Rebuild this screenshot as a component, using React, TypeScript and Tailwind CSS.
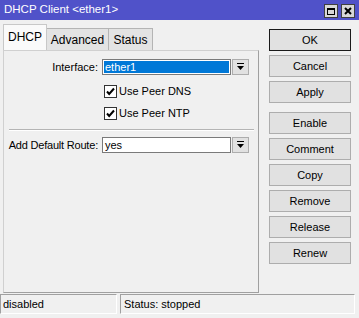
import React from 'react';

const DropArrow = () => (
  <svg width="7" height="8" viewBox="0 0 7 8">
    <rect x="0" y="0" width="7" height="1" fill="#000" />
    <path d="M0 3h7L3.5 7z" fill="#000" />
  </svg>
);

const Check = () => (
  <div className="w-[13px] h-[13px] bg-white border border-[#333] flex items-center justify-center">
    <svg width="9" height="9" viewBox="0 0 9 9">
      <path d="M1 4.5l2.2 2.5L8 1.5" stroke="#000" strokeWidth="2" fill="none" />
    </svg>
  </div>
);

const Combo = ({ value, selected }: { value: string; selected?: boolean }) => (
  <div className="flex gap-[1px]">
    <div className="w-[129px] h-[16px] bg-white border border-[#7a7a7a] p-[1px] flex">
      <div className={`flex-1 flex items-center pl-[1px] ${selected ? 'bg-[#0078d7] text-white' : 'text-black'}`}>
        {value}
      </div>
    </div>
    <div className="w-[17px] h-[16px] bg-[#e1e1e1] border border-[#adadad] flex items-center justify-center">
      <DropArrow />
    </div>
  </div>
);

const Btn = ({ label, primary, className = '' }: { label: string; primary?: boolean; className?: string }) => (
  <div
    className={`h-[22px] w-[82px] flex items-center justify-center bg-[#e1e1e1] border text-black ${
      primary ? 'border-[#1a1a1a]' : 'border-[#adadad]'
    } ${className}`}
  >
    {label}
  </div>
);

export default function App() {
  return (
    <div className="w-[359px] h-[318px] bg-[#f0f0f0] flex flex-col text-[11px] font-['Liberation_Sans',Arial,sans-serif] overflow-hidden">
      {/* Title bar */}
      <div className="h-[20px] bg-[#5052c9] flex items-center text-white pl-[4px] shrink-0">
        <span className="flex-1 text-[11.5px]">DHCP Client &lt;ether1&gt;</span>
        <div className="flex gap-[3px] mr-[4px] mt-[2px]">
          <div className="w-[14px] h-[14px] bg-[#d8d8d8] border border-[#404040] flex items-center justify-center">
            <div className="w-[8px] h-[7px] border border-black border-t-2" />
          </div>
          <div className="w-[14px] h-[14px] bg-[#d8d8d8] border border-[#404040] flex items-center justify-center">
            <svg width="8" height="8" viewBox="0 0 8 8">
              <path d="M1 1l6 6M7 1L1 7" stroke="#000" strokeWidth="2" />
            </svg>
          </div>
        </div>
      </div>

      <div className="flex flex-1">
        {/* Left: tabs + panel */}
        <div className="ml-[3px] mt-[4px] w-[256px] flex flex-col">
          <div className="flex items-end h-[26px] text-[12px]">
            <div className="w-[44px] h-[26px] bg-[#fafafa] border border-b-0 border-[#c8c8c8] flex items-center justify-center pb-[1px] text-black">
              DHCP
            </div>
            <div className="w-[62px] h-[22px] bg-[#e3e3e3] border border-b-0 border-l-0 border-[#b4b4b4] flex items-center justify-center text-black">
              Advanced
            </div>
            <div className="w-[44px] h-[22px] bg-[#e3e3e3] border border-b-0 border-l-0 border-[#b4b4b4] flex items-center justify-center text-black">
              Status
            </div>
          </div>
          <div className="h-[243px] border border-[#d0d0d0] border-r-[#a0a0a0] border-b-[#a0a0a0] flex flex-col">
            <div className="flex items-center mt-[8px] h-[16px]">
              <div className="w-[95px] text-right pr-[1px] text-black">Interface:</div>
              <div className="ml-[3px]">
                <Combo value="ether1" selected />
              </div>
            </div>
            <div className="flex items-center mt-[10px] ml-[100px] h-[13px] gap-[2px] text-black">
              <Check />
              <span>Use Peer DNS</span>
            </div>
            <div className="flex items-center mt-[9px] ml-[100px] h-[13px] gap-[2px] text-black">
              <Check />
              <span>Use Peer NTP</span>
            </div>
            <div className="mt-[9px] ml-[5px] mr-[4px] h-[1px] bg-[#b4b4b4] border-b border-white box-content" />
            <div className="flex items-center mt-[6px] h-[16px]">
              <div className="w-[95px] text-right pr-[1px] text-black tracking-[-0.2px]">Add Default Route:</div>
              <div className="ml-[3px]">
                <Combo value="yes" />
              </div>
            </div>
          </div>
        </div>

        {/* Right: buttons */}
        <div className="ml-[10px] mt-[9px] flex flex-col gap-[4px]">
          <Btn label="OK" primary />
          <Btn label="Cancel" />
          <Btn label="Apply" />
          <Btn label="Enable" className="mt-[5px]" />
          <Btn label="Comment" />
          <Btn label="Copy" />
          <Btn label="Remove" />
          <Btn label="Release" />
          <Btn label="Renew" />
        </div>
      </div>

      {/* Status bar */}
      <div className="h-[23px] flex gap-[3px] pt-[1px] mr-[4px] mb-[3px] shrink-0">
        <div className="w-[117px] h-[20px] border border-[#a0a0a0] border-r-white border-b-white flex items-center pl-[2px] text-black">
          disabled
        </div>
        <div className="flex-1 h-[20px] border border-[#a0a0a0] border-r-white border-b-white flex items-center pl-[3px] text-black">
          Status: stopped
        </div>
      </div>
    </div>
  );
}
